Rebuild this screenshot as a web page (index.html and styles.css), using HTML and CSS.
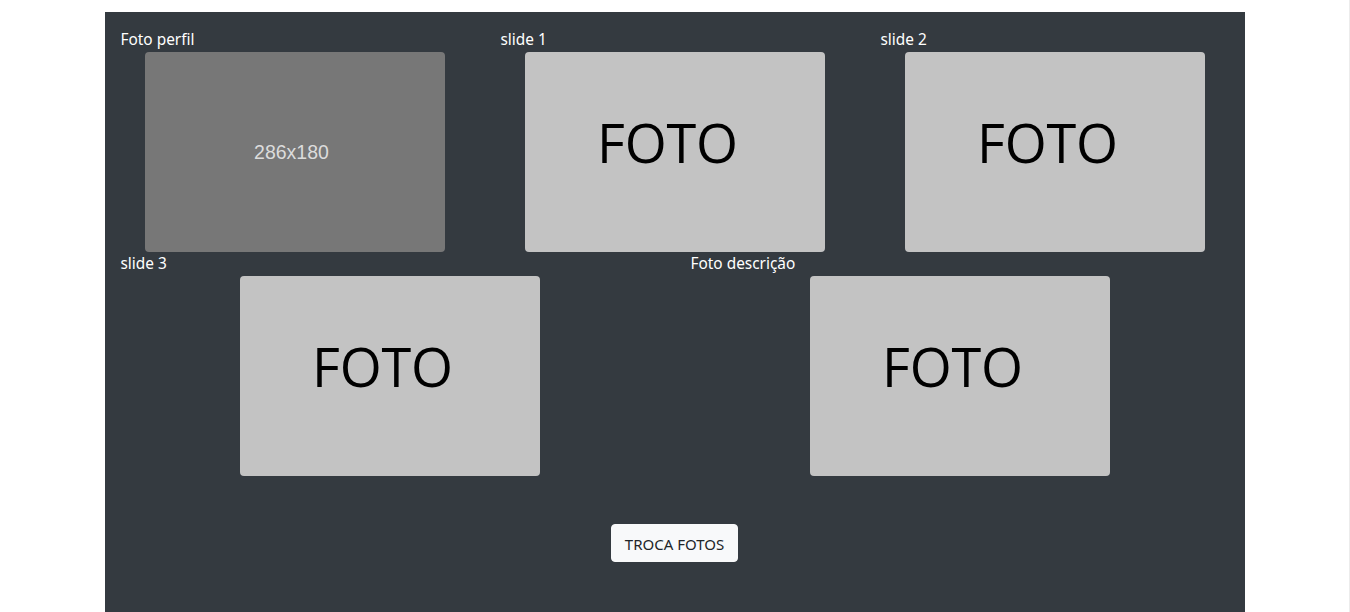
FILE: index.html
```html
<!DOCTYPE html>
<html lang="pt">
<head>
<meta charset="utf-8">
<title>Troca fotos</title>
<link rel="stylesheet" href="styles.css">
</head>
<body>
<div class="container">
  <div class="row row-3">
    <div class="col">
      <label class="lbl">Foto perfil</label>
      <div class="pic pic-placeholder"><span>286x180</span></div>
    </div>
    <div class="col">
      <label class="lbl">slide 1</label>
      <div class="pic pic-foto"><span>FOTO</span></div>
    </div>
    <div class="col">
      <label class="lbl">slide 2</label>
      <div class="pic pic-foto"><span>FOTO</span></div>
    </div>
  </div>
  <div class="row row-2">
    <div class="col">
      <label class="lbl">slide 3</label>
      <div class="pic pic-foto"><span>FOTO</span></div>
    </div>
    <div class="col">
      <label class="lbl">Foto descrição</label>
      <div class="pic pic-foto"><span>FOTO</span></div>
    </div>
  </div>
  <div class="actions">
    <button class="btn" type="button">TROCA FOTOS</button>
  </div>
</div>
</body>
</html>
```
FILE: styles.css
```css
* { box-sizing: border-box; }
html, body { margin: 0; padding: 0; background: #fff; }
body {
  padding-top: 12px;
  font-family: "Noto Sans", "Open Sans", sans-serif;
  font-size: 16px;
  line-height: 24px;
  color: #fff;
  overflow: hidden;
  height: 612px;
  border-right: 1px solid #ececec;
}
.container {
  width: 1140px;
  margin: 0 auto;
  background: #343a40;
  padding-top: 16px;
  padding-bottom: 60px;
}
.row { display: grid; }
.row-3 { grid-template-columns: repeat(3, 380px); }
.row-2 { grid-template-columns: repeat(2, 570px); }
.col {
  padding: 0 15px;
  display: flex;
  flex-direction: column;
}
.lbl {
  display: block;
  font-size: 15.4px;
  height: 24px;
  line-height: 24px;
  padding-left: 1px;
}
.pic {
  width: 300px;
  height: 200px;
  border-radius: 4px;
  align-self: center;
  display: flex;
  align-items: center;
  justify-content: center;
}
.pic-placeholder { background: #777777; }
.pic-placeholder span {
  font-family: "Liberation Sans", Arial, sans-serif;
  font-size: 19.5px;
  color: #dcdcdc;
  margin-left: -6px;
}
.pic-foto { background: #c3c3c3; padding-bottom: 20px; padding-right: 14px; }
.pic-foto span {
  font-family: "Open Sans", sans-serif;
  font-size: 54px;
  line-height: 1;
  color: #000;
  letter-spacing: -0.2px;
}
.actions {
  display: flex;
  justify-content: center;
  padding-top: 48px;
}
.btn {
  font-family: "Noto Sans", "Open Sans", sans-serif;
  font-size: 15px;
  line-height: 24px;
  padding: 7px 13px;
  height: 38px;
  background: #f8f9fa;
  color: #212529;
  border: 1px solid #f8f9fa;
  border-radius: 4px;
}
```
